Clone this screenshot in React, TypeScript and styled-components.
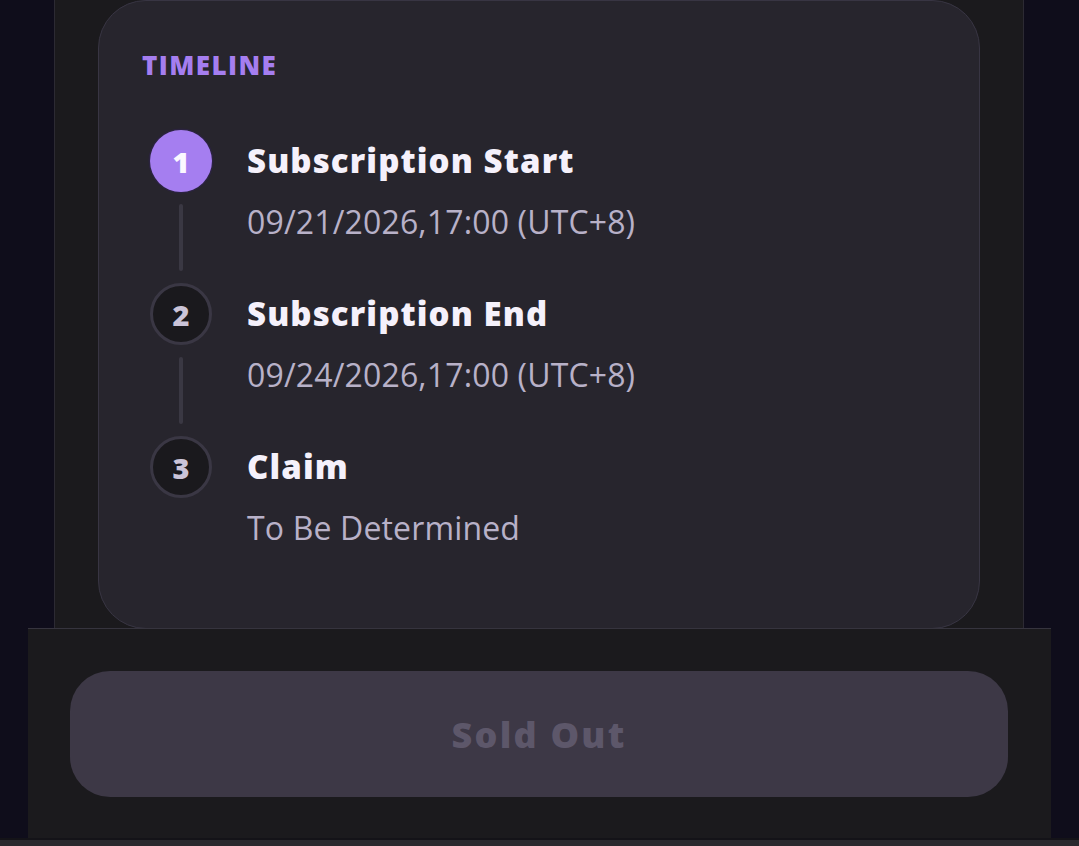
import React from "react";
import styled, { createGlobalStyle } from "styled-components";

const Global = createGlobalStyle`
  html, body { margin: 0; padding: 0; background: #0f0d1b; }
  body { font-family: "Open Sans", "Noto Sans", sans-serif; overflow: hidden; }
  * { box-sizing: border-box; }
`;

const Page = styled.div`
  width: 1079px;
  height: 846px;
  display: flex;
  flex-direction: column;
  background: #0f0d1b;
`;

const Panel = styled.div`
  margin: 0 55px 0 54px;
  height: 628px;
  background: #1b1a1d;
  border-left: 1px solid #2c2a33;
  border-right: 1px solid #2c2a33;
  padding: 0 43px 0 43px;
`;

const Card = styled.section`
  height: 629px;
  background: #27252d;
  border: 1px solid #383543;
  border-radius: 48px;
  padding: 48px 0 0 43px;
`;

const Heading = styled.h2`
  margin: 0;
  font-size: 26px;
  line-height: 32px;
  font-weight: 800;
  color: #a57ef0;
  letter-spacing: 1.4px;
`;

const Steps = styled.ol`
  list-style: none;
  margin: 49px 0 0 8px;
  padding: 0;
`;

const Step = styled.li`
  display: flex;
  gap: 35px;
`;

const Marker = styled.div`
  display: flex;
  flex-direction: column;
  align-items: center;
  width: 62px;
  flex: none;
`;

const Circle = styled.div<{ $active?: boolean }>`
  width: 62px;
  height: 62px;
  border-radius: 50%;
  display: flex;
  align-items: center;
  justify-content: center;
  background: ${(p) => (p.$active ? "#a57ef0" : "#1a191d")};
  border: ${(p) => (p.$active ? "none" : "3px solid #3a3744")};
  box-shadow: ${(p) => (p.$active ? "0 0 0 1.5px #2b2340" : "none")};
  color: ${(p) => (p.$active ? "#fbf8ff" : "#cbc4d8")};
  font-size: 29px;
  font-weight: 800;
  line-height: 1;
`;

const Connector = styled.div`
  width: 4px;
  height: 67px;
  margin: 12px 0;
  border-radius: 2px;
  background: #3a3843;
`;

const Text = styled.div`
  padding-top: 11px;
`;

const Title = styled.div`
  font-size: 33px;
  line-height: 40px;
  font-weight: 800;
  color: #f5f1fb;
  letter-spacing: 1.1px;
`;

const Sub = styled.div`
  margin-top: 22px;
  font-size: 32px;
  line-height: 38px;
  font-weight: 400;
  color: #b8b1c8;
  letter-spacing: 0.15px;
`;

const Footer = styled.footer`
  margin: 0 28px;
  height: 210px;
  background: #1b1a1d;
  border-top: 1px solid #36343e;
  padding: 42px 43px 0 42px;
`;

const Button = styled.button`
  width: 100%;
  height: 126px;
  border: none;
  border-radius: 40px;
  background: #3d3846;
  color: #5d576a;
  font-family: "Open Sans", "Noto Sans", sans-serif;
  font-size: 36px;
  font-weight: 800;
  letter-spacing: 2.2px;
  cursor: not-allowed;
`;

const Strip = styled.div`
  flex: 1;
  background: #2a292e;
  border-top: 2px solid #141318;
`;

const steps = [
  { n: 1, title: "Subscription Start", sub: "09/21/2026,17:00 (UTC+8)", active: true },
  { n: 2, title: "Subscription End", sub: "09/24/2026,17:00 (UTC+8)", active: false },
  { n: 3, title: "Claim", sub: "To Be Determined", active: false },
];

export default function App() {
  return (
    <Page>
      <Global />
      <Panel>
        <Card>
          <Heading>TIMELINE</Heading>
          <Steps>
            {steps.map((s, i) => (
              <Step key={s.n}>
                <Marker>
                  <Circle $active={s.active}>{s.n}</Circle>
                  {i < steps.length - 1 && <Connector />}
                </Marker>
                <Text>
                  <Title>{s.title}</Title>
                  <Sub>{s.sub}</Sub>
                </Text>
              </Step>
            ))}
          </Steps>
        </Card>
      </Panel>
      <Footer>
        <Button disabled>Sold Out</Button>
      </Footer>
      <Strip />
    </Page>
  );
}
